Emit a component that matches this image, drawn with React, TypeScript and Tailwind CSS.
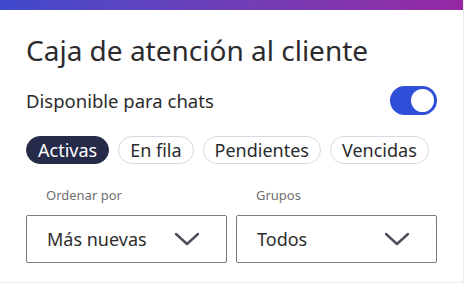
import { useState } from "react"

const tabs = ["Activas", "En fila", "Pendientes", "Vencidas"]

const Chevron = () => (
  <svg width="26" height="14" viewBox="0 0 26 14" fill="none" stroke="#4b4f5c" strokeWidth="2.4" strokeLinecap="round" strokeLinejoin="round">
    <path d="M2 2l11 10L24 2" />
  </svg>
)

const Select = ({ label, value }: { label: string; value: string }) => (
  <div className="flex flex-col">
    <span className="pl-5 text-[13px] leading-4 text-[#6f6f6f]">{label}</span>
    <div className="mt-[12px] flex h-12 w-[201px] items-center justify-between rounded-[2px] border border-[#7a7a7a] pl-5 pr-[26px]">
      <span className="text-[18px] text-[#2e2e2e]">{value}</span>
      <Chevron />
    </div>
  </div>
)

export default function App() {
  const [active, setActive] = useState("Activas")
  const [on, setOn] = useState(true)

  return (
    <div className="h-[283px] w-[464px] border-r border-b border-[#ececec] bg-white font-['Noto_Sans',sans-serif]">
      <div className="h-[10px] bg-gradient-to-r from-[#3d49cc] to-[#9527a3]" />
      <div className="px-[26px]">
        <h1 className="mt-[24px] text-[28px] leading-8 text-[#2b2b2d]">Caja de atención al cliente</h1>

        <div className="mt-[20px] flex items-center justify-between">
          <span className="text-[18.5px] text-[#2b2b2d]">Disponible para chats</span>
          <button
            onClick={() => setOn(!on)}
            className={on
              ? "flex h-[29px] w-[47px] items-center justify-end rounded-full bg-[#2f4fd8] px-[3px]"
              : "flex h-[29px] w-[47px] items-center justify-start rounded-full bg-gray-300 px-[3px]"}
          >
            <span className="h-[23px] w-[23px] rounded-full bg-white" />
          </button>
        </div>

        <div className="mt-[21px] flex gap-[9px]">
          {tabs.map((t) => (
            <button
              key={t}
              onClick={() => setActive(t)}
              className={active === t
                ? "h-[28px] rounded-full border border-[#262b4a] bg-[#262b4a] px-[11px] text-[18px] leading-none text-white"
                : "h-[28px] rounded-full border border-[#d8d8e0] bg-white px-[11px] text-[18px] leading-none text-[#2b2b2d]"}
            >
              {t}
            </button>
          ))}
        </div>

        <div className="mt-[23px] flex gap-[9px]">
          <Select label="Ordenar por" value="Más nuevas" />
          <Select label="Grupos" value="Todos" />
        </div>
      </div>
    </div>
  )
}
